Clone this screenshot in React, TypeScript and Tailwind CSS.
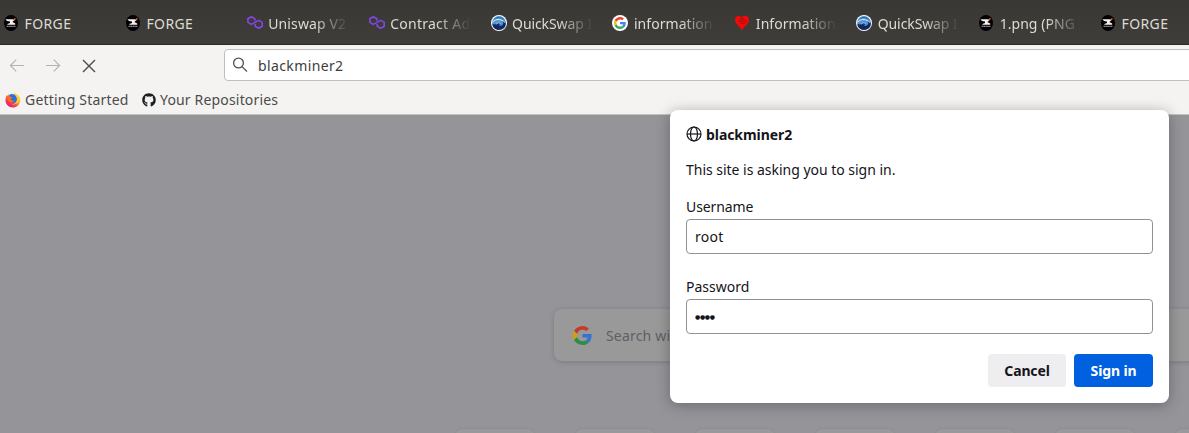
import type { ReactNode } from "react";
import { FaGithub } from "react-icons/fa";

function ForgeIcon() {
  return (
    <svg width="16" height="16" viewBox="0 0 16 16">
      <ellipse cx="8" cy="8" rx="7" ry="8" fill="#000" />
      <path d="M2.400 4.300h7.600l1.300 1.300L9.300 7l2.900 1.500v1.200H4.400V8.900L7 8V6.400L4 5.900z" fill="#f2f2f2" />
      <path d="M9.700 4.600l2.300-1.700.9 1.200-1.900 1.600z" fill="#e5603c" />
      <path d="M3.500 11.300h9" stroke="#8a8a8a" strokeWidth="1.2" strokeDasharray="1.6 .3" />
    </svg>
  );
}

function PolygonIcon() {
  return (
    <svg width="16" height="16" viewBox="0 0 16 16" fill="none" stroke="#8247e5" strokeWidth="1.600" strokeLinejoin="round">
      <path d="M7.800 5.800V3.700l-3.500-2-3.400 2v3.700l3.400 2 7.400-4 3.500 2v3.800l-3.500 2-3.500-2V9" />
    </svg>
  );
}

function QuickSwapIcon() {
  return (
    <svg width="16" height="16" viewBox="0 0 16 16">
      <circle cx="8" cy="8" r="8" fill="#fff" />
      <circle cx="8" cy="8" r="6.900" fill="#4a94d2" />
      <path d="M1.600 8.800c1.800 1.200 3.200.6 4.300-.3 1.300-1.100 3.300-1 3.300.4 0 .9-1.200 1.200-2 .8.900 1.500 3.500 1.500 4.700-.2 1-1.500.2-3.100-1.200-3.900 2 .2 3.300 1 4.200 2.600A6.900 6.900 0 0 1 1.600 10.500z" fill="#14265f" />
      <path d="M1.800 7.400C3.300 4.700 7.500 3.800 10.800 5.300c1.500.7 2.500 1.500 3.400 2.400" fill="none" stroke="#fff" strokeWidth=".9" />
      <path d="M5 9.300c1.500-1.700 3.900-2 4.300-.5" fill="none" stroke="#d8ebfa" strokeWidth=".8" />
      <path d="M4.300 3.400c2.600-1.800 6-1.200 8.100 1.200" fill="none" stroke="#1f5593" strokeWidth=".8" />
    </svg>
  );
}

function GoogleLogo({ size }: { size: number }) {
  return (
    <svg width={size} height={size} viewBox="0 0 48 48">
      <path fill="#EA4335" d="M24 9.500c3.540 0 6.710 1.220 9.210 3.600l6.850-6.850C35.900 2.380 30.470 0 24 0 14.620 0 6.510 5.380 2.560 13.220l7.980 6.190C12.430 13.720 17.740 9.500 24 9.500z" />
      <path fill="#4285F4" d="M46.980 24.550c0-1.570-.15-3.090-.38-4.550H24v9.020h12.940c-.58 2.960-2.260 5.480-4.780 7.180l7.730 6c4.510-4.180 7.090-10.360 7.090-17.650z" />
      <path fill="#FBBC05" d="M10.530 28.590c-.48-1.450-.76-2.990-.76-4.590s.27-3.140.76-4.590l-7.980-6.190C.92 16.460 0 20.120 0 24c0 3.880.92 7.540 2.560 10.780l7.970-6.190z" />
      <path fill="#34A853" d="M24 48c6.480 0 11.930-2.130 15.890-5.810l-7.730-6c-2.150 1.450-4.920 2.300-8.160 2.300-6.260 0-11.570-4.220-13.470-9.910l-7.980 6.190C6.510 42.620 14.620 48 24 48z" />
    </svg>
  );
}

function GoogleTabIcon() {
  return (
    <div className="flex size-4 items-center justify-center rounded-full bg-white">
      <GoogleLogo size={12} />
    </div>
  );
}

function HeartIcon() {
  return (
    <svg width="16" height="16" viewBox="0 0 16 16">
      <path d="M8 15.300C6 11.700 1 8.800 1 4.700 1 .5 5.600-.2 7.200 2.500 9.500-.3 15 .3 15 5c0 4.500-4.800 5.800-7 10.300z" fill="#f40808" />
      <path d="M8.800 5.200c-.9-.7-1.800.3-1.300 1.100.7 1.100 2.700.5 2.800-1.100.1-1.700-2.300-2.500-3.700-1.200-1.500 1.500-.8 4 1.300 4.600 2.100.5 4.300-1 4.300-3.600" fill="none" stroke="#7c1715" strokeWidth=".75" />
    </svg>
  );
}

function FirefoxIcon() {
  return (
    <svg width="16" height="16" viewBox="0 0 16 16">
      <defs>
        <linearGradient id="flame" x1=".85" y1=".1" x2=".2" y2=".95">
          <stop offset="0" stopColor="#fff44f" />
          <stop offset=".35" stopColor="#ffb02e" />
          <stop offset=".65" stopColor="#ff4b3a" />
          <stop offset="1" stopColor="#e31587" />
        </linearGradient>
      </defs>
      <path d="M1.800 3.100l.8 1L3.800 2l1 1.800C6.500 3 8 3.500 8.500 2.600L9.300.4c2 1 3 2.100 3.500 3.300l.3-1.200c1.800 1.700 2.500 4 2.100 6.500-.6 3.800-3.500 6.500-7.200 6.500C3.500 15.500.5 12.200.5 8.300c0-1.900.5-3.800 1.300-5.200z" fill="url(#flame)" />
      <path d="M4.200 3C6.300 1.300 9.300 1.900 10.900 4.200c1.500 2 1.300 4.700-.4 6.100-1.700 1.300-4 1.200-5.200-.3z" fill="#2470e8" />
      <path d="M1.800 4.300c1.700-.9 3.200-.4 4 .8l2 .4c-.3 1-2 1.100-2 2.100.7 1.400 2.400 1.300 3.700.5-.5 2-2.200 3-4.100 2.500C3.500 10 2 7.400 1.800 4.300z" fill="#ff6a20" />
      <path d="M10.300 2c2.200 2 2.600 4.700 1.700 7-.9 2.200-2.900 3.400-5.100 3.200 4.100.9 7.200-1.700 7.200-5.100 0-2.400-1.400-4.200-3.800-5.100z" fill="#ffcf3f" />
    </svg>
  );
}

const tabs: { icon: ReactNode; title: string; style: string; faded: boolean }[] = [
  { icon: <ForgeIcon />, title: "FORGE", style: "tracking-[0.4px]", faded: false },
  { icon: <ForgeIcon />, title: "FORGE", style: "tracking-[0.4px]", faded: false },
  { icon: <PolygonIcon />, title: "Uniswap V2", style: "tracking-[0.1px]", faded: true },
  { icon: <PolygonIcon />, title: "Contract Address", style: "tracking-[0.25px]", faded: true },
  { icon: <QuickSwapIcon />, title: "QuickSwap Info", style: "tracking-[-0.1px]", faded: true },
  { icon: <GoogleTabIcon />, title: "information", style: "tracking-[0.05px]", faded: true },
  { icon: <HeartIcon />, title: "Information", style: "tracking-[0.05px]", faded: true },
  { icon: <QuickSwapIcon />, title: "QuickSwap Info", style: "tracking-[-0.1px]", faded: true },
  { icon: <ForgeIcon />, title: "1.png (PNG Image)", style: "tracking-[0.05px]", faded: true },
  { icon: <ForgeIcon />, title: "FORGE", style: "tracking-[0.4px]", faded: false },
];

function TabStrip() {
  return (
    <div className="flex h-[45px] shrink-0 border-b border-[#2b2a27] bg-linear-to-b from-[#393834] to-[#3e3d39] pl-[3px] text-[#dfdbd2]">
      {tabs.map((tab, i) => (
        <div key={i} className="flex h-[46px] w-[121.9px] shrink-0 items-center gap-[5.5px]">
          <div className="size-4 shrink-0">{tab.icon}</div>
          <span
            className={`mt-[2px] w-[80px] overflow-hidden whitespace-nowrap leading-5 ${tab.style} ${
              tab.faded ? "[mask-image:linear-gradient(to_right,#000_46px,transparent_81px)]" : ""
            }`}
          >
            {tab.title}
          </span>
        </div>
      ))}
    </div>
  );
}

function Toolbar() {
  return (
    <div className="h-[70px] shrink-0 border-b border-[#c5c3bf] bg-[#f4f3f2] text-[#4b4b49]">
      <div className="flex h-[40px] items-center">
        <svg width="224" height="40" viewBox="0 0 224 40" fill="none" className="shrink-0">
          <path d="M10.500 20.500H24M16.200 14.700l-5.800 5.800 5.800 5.800M46 20.500h13.500M53.800 14.700l5.800 5.800-5.800 5.800" stroke="#b4b3b1" strokeWidth="1.2" />
          <path d="M83 15l12 12M95 15L83 27" stroke="#4a4a48" strokeWidth="1.4" />
        </svg>
        <div className="-mr-2 flex h-8 flex-1 items-center rounded-[4px] border border-[#c1bfbc] bg-white pl-[7px]">
          <svg width="16" height="16" viewBox="0 0 16 16" fill="none" stroke="#50504f" strokeWidth="1.3">
            <circle cx="6.500" cy="6" r="4.900" />
            <path d="M10 9.600l5 4.900" />
          </svg>
          <span className="mt-px ml-[10px] tracking-[0.38px] text-[#3d3d3d]">blackminer2</span>
        </div>
      </div>
      <div className="flex h-[29px] items-center pl-[5px]">
        <FirefoxIcon />
        <span className="ml-1 w-[117px] tracking-[0.2px]">Getting Started</span>
        <FaGithub size={14} color="#1b1f23" />
        <span className="ml-1 tracking-[0.17px]">Your Repositories</span>
      </div>
    </div>
  );
}

function NewTabPage() {
  return (
    <div className="flex-1 bg-[#959499] pt-[194px]">
      <div className="-mr-4 ml-[554px] flex h-[52px] items-center rounded-[8px] bg-[#999] pl-[19px] shadow-[0_1px_5px_rgba(20,20,30,0.2)]">
        <div className="brightness-85">
          <GoogleLogo size={19} />
        </div>
        <span className="ml-[14px] text-[14px] tracking-[0.18px] text-[#5f5e66]">Search with Google or enter address</span>
      </div>
      <div className="mt-[68px] ml-[455px] flex gap-10">
        {[0, 1, 2, 3, 4, 5, 6].map((i) => (
          <div key={i} className="size-20 shrink-0 rounded-[8px] bg-[#999] shadow-[0_0_3px_rgba(20,20,30,0.1)]" />
        ))}
      </div>
    </div>
  );
}

function SignInDialog() {
  const field = "block h-[35px] w-full rounded-[4px] border border-[#929294] bg-white px-2 text-[#15141a] outline-none";
  return (
    <div className="absolute top-[110px] left-[670px] h-[293px] w-[499px] rounded-[8px] bg-white px-4 text-[#15141a] shadow-[0_2px_14px_rgba(30,30,35,0.36)]">
      <div className="flex h-[48px] items-center gap-1">
        <svg width="16" height="16" viewBox="0 0 16 16" fill="none" stroke="#15141a" strokeWidth="1.2">
          <circle cx="8" cy="8" r="7" />
          <ellipse cx="8" cy="8" rx="3.500" ry="7" />
          <path d="M1 8h14" />
        </svg>
        <span className="font-bold tracking-[-0.07px]">blackminer2</span>
      </div>
      <p className="mt-[2px] h-5 leading-5 tracking-[-0.02px]">This site is asking you to sign in.</p>
      <label className="mt-[17px] block h-[22px] leading-5">
        <span className="tracking-[-0.1px]">Username</span>
      </label>
      <input className={`${field} tracking-[0.3px]`} defaultValue="root" />
      <label className="mt-[23px] block h-[22px] leading-5">Password</label>
      <div className="flex h-[35px] items-center rounded-[4px] border border-[#929294] px-2 font-['DejaVu_Sans',sans-serif] text-[6px] tracking-[-0.3px]">●●●●</div>
      <div className="mt-5 flex justify-end gap-2">
        <button className="h-[33px] w-[78px] rounded-[4px] bg-[#eeeef0] font-bold tracking-[-0.15px]">Cancel</button>
        <button className="h-[33px] w-[79px] rounded-[4px] bg-[#0060df] font-bold tracking-[-0.12px] text-white">Sign in</button>
      </div>
    </div>
  );
}

export default function App() {
  return (
    <div className="relative flex h-[433px] w-full flex-col overflow-hidden font-['Noto_Sans',sans-serif] text-[14px]">
      <TabStrip />
      <Toolbar />
      <NewTabPage />
      <SignInDialog />
    </div>
  );
}
